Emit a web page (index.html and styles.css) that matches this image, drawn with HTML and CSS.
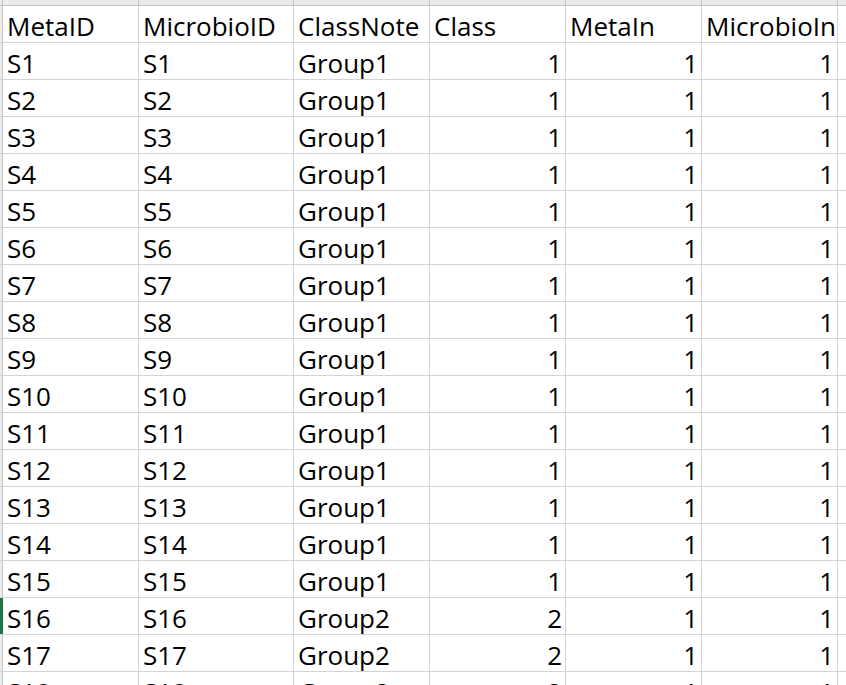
FILE: index.html
```html
<!DOCTYPE html>
<html>
<head>
<meta charset="utf-8">
<link rel="stylesheet" href="styles.css">
</head>
<body>
<div class="sheet">
  <div class="colhead">
    <div class="hc corner"></div><div class="hc"></div><div class="hc"></div><div class="hc"></div><div class="hc"></div><div class="hc"></div><div class="hc"></div><div class="hc"></div>
  </div>
  <div class="grid" id="grid">
    <div class="rh"></div><div class="c">MetaID</div><div class="c">MicrobioID</div><div class="c">ClassNote</div><div class="c">Class</div><div class="c">MetaIn</div><div class="c">MicrobioIn</div><div class="c"></div>
  </div>
</div>
<script src="script.js"></script>
</body>
</html>
```
FILE: script.js
```js
const grid = document.getElementById('grid');
for (let i = 1; i <= 18; i++) {
  const g = i <= 15 ? 1 : 2;
  const cells = [
    ['rh' + (i === 16 ? ' sel' : ''), ''],
    ['c', 'S' + i],
    ['c', 'S' + i],
    ['c', 'Group' + g],
    ['c num', String(g)],
    ['c num', '1'],
    ['c num', '1'],
    ['c', '']
  ];
  for (const [cls, txt] of cells) {
    const d = document.createElement('div');
    d.className = cls;
    d.textContent = txt;
    grid.appendChild(d);
  }
}
```
FILE: styles.css
```css
html, body {
  margin: 0;
  padding: 0;
  background: #ffffff;
  overflow: hidden;
}
.sheet {
  width: 846px;
  height: 685px;
  overflow: hidden;
  font-family: "Open Sans", "Liberation Sans", sans-serif;
  font-size: 26px;
  color: #000;
}
.colhead, .grid {
  display: grid;
  grid-template-columns: 2px 135px 154px 135px 135px 135px 135px 9px;
  column-gap: 1px;
}
.colhead {
  background: #c4c4c4;
  padding-bottom: 1px;
  grid-template-rows: 5px;
}
.hc {
  background: #ebebeb;
}
.grid {
  background: #d4d4d4;
  row-gap: 1px;
  grid-auto-rows: 36px;
  padding-bottom: 1px;
}
.rh {
  background: #ebebeb;
  box-shadow: 1px 0 0 #c4c4c4;
}
.rh.sel {
  background: #217346;
  box-shadow: 1px 0 0 #217346;
}
.c {
  background: #fff;
  padding: 3px 4px 0 4px;
  line-height: 34px;
  white-space: nowrap;
  overflow: visible;
}
.num {
  text-align: right;
  padding-right: 3px;
}
```
